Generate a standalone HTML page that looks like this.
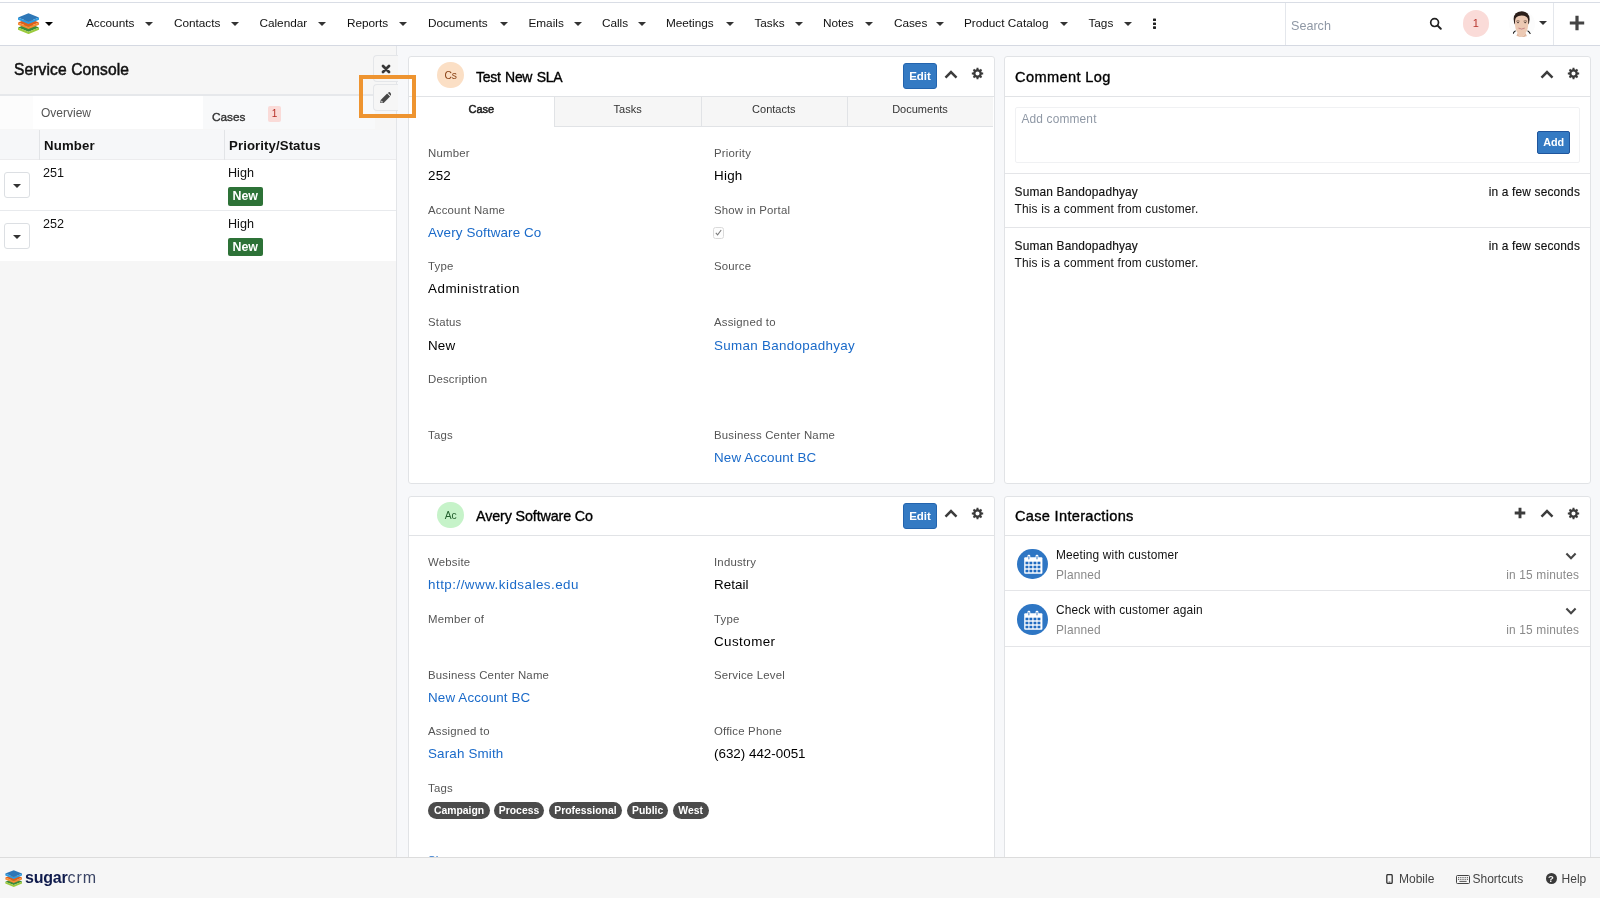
<!DOCTYPE html>
<html lang="en">
<head>
<meta charset="utf-8">
<title>Service Console</title>
<style>
*{box-sizing:border-box;margin:0;padding:0}
html,body{width:1600px;height:898px;overflow:hidden}
html{background:#f7f8fa}
body{position:relative;background:transparent;will-change:transform;font-family:"Liberation Sans",sans-serif;font-size:13px;color:#000;-webkit-font-smoothing:antialiased}
.abs{position:absolute}
.t{position:absolute;white-space:nowrap;line-height:1}
a{color:#176de5;text-decoration:none}

/* top nav */
#topline{left:0;top:0;width:1600px;height:3px;background:#fff;border-bottom:1px solid #d9dde5}
#nav{left:0;top:3px;width:1600px;height:43px;background:#fff;border-bottom:1px solid #d5d9e2}
.nv{position:absolute;top:12px;margin-left:.4px;font-size:11.8px;letter-spacing:0;white-space:nowrap;line-height:16px;color:#111}
.car{position:absolute;width:0;height:0;border-left:4px solid transparent;border-right:4px solid transparent;border-top:4px solid #333;top:19px}

/* left console */
#left{left:0;top:46px;width:397px;height:811px;background:#f6f6f6;border-right:1px solid #e3e5e8}
/* panels */
.panel{position:absolute;background:#fff;border:1px solid #e1e3e6;border-radius:3px}
.phead{position:absolute;left:0;top:0;right:0;height:38px;border-bottom:1px solid #e1e3e6}
.ptitle{position:absolute;font-size:15px;font-weight:normal;line-height:1;white-space:nowrap;color:#000;-webkit-text-stroke:.35px #000}
.lbl{position:absolute;font-size:12px;color:#555;line-height:1;white-space:nowrap;letter-spacing:.2px}
.val{position:absolute;font-size:14px;color:#000;line-height:1;white-space:nowrap;letter-spacing:.15px}
.val.lnk{color:#1a6ac9}
.btn{position:absolute;background:#347ac3;border:1px solid #2364ae;color:#fff;font-weight:bold;border-radius:3px;text-align:center;font-size:13px}

/* footer */
#foot{left:0;top:857px;width:1600px;height:41px;background:#f6f6f6;border-top:1px solid #dcdcdc}
</style>
</head>
<body>
<div id="topline" class="abs"></div>
<div id="nav" class="abs">
<svg class="abs" style="left:18px;top:10.1px" width="21" height="21.2" viewBox="0 0 21 21.2"><path d="M0 14.5 L10.5 10.2 L21 14.5 L10.5 18.8Z" fill="#3c8c3a"/><path d="M0 14.5 L10.5 18.8 L21 14.5 L21 16.8 L10.5 21.1 L0 16.8Z" fill="#9bcb3d"/><path d="M0 9.5 L10.5 5.2 L21 9.5 L10.5 13.8Z" fill="#df5f1b"/><path d="M0 9.5 L10.5 13.8 L21 9.5 L21 11.8 L10.5 16.1 L0 11.8Z" fill="#f58b34"/><path d="M0 4.5 L10.5 0.20000000000000018 L21 4.5 L10.5 8.8Z" fill="#2e77b7"/><path d="M0 4.5 L10.5 8.8 L21 4.5 L21 6.8 L10.5 11.100000000000001 L0 6.8Z" fill="#2e9be0"/></svg>
<div class="car" style="left:45px;top:19px;border-top-color:#000"></div>
<div class="nv" style="left:85.5px">Accounts</div><div class="car" style="left:145px"></div>
<div class="nv" style="left:173.5px">Contacts</div><div class="car" style="left:231px"></div>
<div class="nv" style="left:259.0px">Calendar</div><div class="car" style="left:318px"></div>
<div class="nv" style="left:346.5px">Reports</div><div class="car" style="left:399px"></div>
<div class="nv" style="left:427.5px">Documents</div><div class="car" style="left:500px"></div>
<div class="nv" style="left:528.0px">Emails</div><div class="car" style="left:573.5px"></div>
<div class="nv" style="left:601.5px">Calls</div><div class="car" style="left:637.5px"></div>
<div class="nv" style="left:665.5px">Meetings</div><div class="car" style="left:726px"></div>
<div class="nv" style="left:754.0px">Tasks</div><div class="car" style="left:795px"></div>
<div class="nv" style="left:822.5px">Notes</div><div class="car" style="left:865px"></div>
<div class="nv" style="left:893.5px">Cases</div><div class="car" style="left:935.5px"></div>
<div class="nv" style="left:963.5px">Product Catalog</div><div class="car" style="left:1060px"></div>
<div class="nv" style="left:1088.0px">Tags</div><div class="car" style="left:1123.5px"></div>
<svg class="abs" style="left:1152px;top:15px" width="5" height="12" viewBox="0 0 5 12"><rect x="1" y="0.5" width="3" height="2.6" rx=".6" fill="#222"/><rect x="1" y="4.4" width="3" height="2.6" rx=".6" fill="#222"/><rect x="1" y="8.3" width="3" height="2.6" rx=".6" fill="#222"/></svg>
<div class="abs" style="left:1285px;top:0;width:1px;height:42px;background:#e4e7ec"></div>
<div class="t" style="left:1291px;top:15px;font-size:12.6px;color:#8f98a5;line-height:16px">Search</div>
<svg class="abs" style="left:1429px;top:14.4px" width="14" height="14" viewBox="0 0 14 14"><circle cx="5.6" cy="5.6" r="3.9" fill="none" stroke="#222" stroke-width="1.7"/><path d="M8.6 8.6 L11.8 11.8" stroke="#222" stroke-width="2" stroke-linecap="round"/></svg>
<div class="abs" style="left:1462.5px;top:7.4px;width:26.7px;height:26.7px;border-radius:50%;background:#fadbd8;color:#b6322b;font-size:11px;line-height:27.4px;text-align:center">1</div>
<div class="abs" style="left:1508.8px;top:7.5px;width:26.4px;height:26.4px;border-radius:50%;overflow:hidden"><svg class="abs" style="left:-.8px;top:-.8px" width="28" height="28" viewBox="0 0 28 28"><g><rect width="28" height="28" fill="#fcfcfc"/><ellipse cx="13.6" cy="8.6" rx="7.9" ry="7.4" fill="#2b1e19"/><path d="M5.8 9 Q5.6 13 7 14.6 L7.6 10Z M21.4 9 Q21.6 13 20.2 14.6 L19.6 10Z" fill="#2b1e19"/><path d="M7 11.5 Q6.6 5.6 13.6 5.4 Q20.6 5.6 20.2 11.5 Q20.6 19 17.6 23 Q15.6 26.4 13.6 26.6 Q11.6 26.4 9.6 23 Q6.6 19 7 11.5Z" fill="#ecc9b3"/><path d="M9.6 23 Q11.6 26.4 13.6 26.6 Q15.6 26.4 17.6 23 L19.6 28 L7.6 28Z" fill="#e2b9a0"/><path d="M8.2 11.3 Q9.8 10.3 11.6 11.2 M15.6 11.2 Q17.4 10.3 19 11.3" stroke="#5a4236" stroke-width=".7" fill="none"/><ellipse cx="10" cy="12.6" rx="1.1" ry=".6" fill="#4b3a33"/><ellipse cx="17.2" cy="12.6" rx="1.1" ry=".6" fill="#4b3a33"/><path d="M10.6 18.2 Q13.6 20.6 16.6 18.2 Q13.6 19.4 10.6 18.2Z" fill="#fff" stroke="#c27a78" stroke-width=".6"/><path d="M4.6 24.4 Q5.8 21.6 7.6 20.8 M22.6 24.4 Q21.4 21.6 19.6 20.8" stroke="#1a1a1a" stroke-width="1.1" fill="none"/></g></svg></div>
<div class="car" style="left:1538.5px;top:18px"></div>
<div class="abs" style="left:1553px;top:0;width:1px;height:42px;background:#e4e7ec"></div>
<svg class="abs" style="left:1569px;top:12px" width="16" height="16" viewBox="0 0 16 16"><path d="M8 0.8 V15.2 M0.8 8 H15.2" stroke="#444" stroke-width="3.2"/></svg>
</div>

<div id="left" class="abs">
<div class="t" style="left:14px;top:15px;font-size:15.6px;line-height:18px;-webkit-text-stroke:.5px #111;color:#111;letter-spacing:.1px">Service Console</div>
<div class="abs" style="left:0;top:48px;width:396px;height:2px;background:#e6e8eb"></div>
<div class="abs" style="left:0;top:50px;width:33px;height:33px;background:#fcfcfc"></div><div class="abs" style="left:33px;top:50px;width:170px;height:33px;background:#fff"></div>
<div class="abs" style="left:203px;top:50px;width:172px;height:33px;background:#f8f9fa"></div>
<div class="t" style="left:41px;top:59px;font-size:12px;line-height:16px;color:#555">Overview</div>
<div class="t" style="left:212px;top:63px;font-size:11.8px;line-height:16px;color:#333;-webkit-text-stroke:.35px #333">Cases</div>
<div class="abs" style="left:268px;top:59.6px;width:13px;height:16.5px;border-radius:2px;background:#fadbd8;color:#b52a22;font-size:10px;line-height:16.5px;text-align:center">1</div>
<div class="abs" style="left:0;top:84px;width:396px;height:30px;background:#f6f7f9;border-bottom:1px solid #ececee"></div>
<div class="abs" style="left:39px;top:84px;width:1px;height:30px;background:#e2e4e7"></div>
<div class="abs" style="left:224px;top:84px;width:1px;height:30px;background:#e2e4e7"></div>
<div class="t" style="left:44px;top:92px;font-size:13.2px;line-height:16px;font-weight:bold;color:#111;letter-spacing:.15px">Number</div>
<div class="t" style="left:229px;top:92px;font-size:13.2px;line-height:16px;font-weight:bold;color:#111;letter-spacing:.1px">Priority/Status</div>
<div class="abs" style="left:0;top:114px;width:396px;height:101px;background:#fff"></div>
<div class="abs" style="left:0;top:164px;width:396px;height:1px;background:#e8eaed"></div>
<div class="abs" style="left:4px;top:126.2px;width:26px;height:26.3px;background:#fff;border:1px solid #dcdfe3;border-radius:3px"></div>
<div class="car" style="left:13px;top:138px"></div>
<div class="t" style="left:43px;top:119px;font-size:12.6px;line-height:16px;color:#111">251</div>
<div class="t" style="left:228px;top:119px;font-size:12.6px;line-height:16px;color:#111">High</div>
<div class="abs" style="left:228px;top:141.4px;width:34.5px;height:18.3px;background:#2d7237;border-radius:2px;color:#fff;font-weight:bold;font-size:12.4px;line-height:18.3px;text-align:center">New</div>
<div class="abs" style="left:4px;top:176.9px;width:26px;height:26px;background:#fff;border:1px solid #dcdfe3;border-radius:3px"></div>
<div class="car" style="left:13px;top:188.7px"></div>
<div class="t" style="left:43px;top:169.7px;font-size:12.6px;line-height:16px;color:#111">252</div>
<div class="t" style="left:228px;top:169.7px;font-size:12.6px;line-height:16px;color:#111">High</div>
<div class="abs" style="left:228px;top:192.2px;width:34.5px;height:18.3px;background:#2d7237;border-radius:2px;color:#fff;font-weight:bold;font-size:12.4px;line-height:18.3px;text-align:center">New</div>
</div>

<div class="abs" style="left:373px;top:55px;width:25px;height:27px;background:#f6f6f6;border:1px solid #e4e6e9;border-right:none;border-radius:4px 0 0 4px"></div>
<svg class="abs" style="left:381px;top:64.4px" width="10" height="10" viewBox="0 0 10 10"><path d="M2 2 L8 8 M8 2 L2 8" stroke="#383838" stroke-width="2.8" stroke-linecap="round"/></svg>
<div class="abs" style="left:373px;top:84px;width:25px;height:27px;background:#f6f6f6;border:1px solid #e4e6e9;border-right:none;border-radius:4px 0 0 4px"></div>
<svg class="abs" style="left:379.7px;top:91.6px" width="11.8" height="11.5" viewBox="0 -0.2 12.4 12"><path d="M0.2 11.8 L0.7 8.2 L7.5 1.4 L10.6 4.5 L3.8 11.3Z" fill="#474747"/><path d="M8.3 0.7 L9.2 -.1 Q9.8 -.4 10.4 .1 L12 1.7 Q12.5 2.3 12.1 2.9 L11.3 3.7Z" fill="#474747"/><path d="M1.6 8.8 L3.3 10.5 L1.2 10.9Z" fill="#f6f6f6"/></svg>
<div class="abs" style="left:359px;top:75.1px;width:57px;height:43.3px;border:4.7px solid #ee9430;z-index:10"></div>

<div class="panel" id="p1" style="left:408px;top:56px;width:586.5px;height:428px">
<div class="abs" style="left:0;top:0;width:584.5px;height:40px;border-bottom:1px solid #e1e3e6"></div>
<div class="abs" style="left:0;top:1px;width:584px;height:0">
<div class="abs" style="left:28.4px;top:3.5px;width:26.6px;height:26.6px;border-radius:50%;background:#fbdfc5;color:#8a4216;font-size:10.3px;line-height:27.6px;text-align:center">Cs</div>
<div class="ptitle" style="left:67px;top:9.5px;font-size:14px;line-height:18px;letter-spacing:-.3px;word-spacing:1px">Test New SLA</div>
<div class="btn" style="left:494px;top:5px;width:34px;height:26px;line-height:25px;font-size:11.5px">Edit</div>
<svg class="abs" style="left:534.6px;top:11.5px" width="14" height="10" viewBox="0 0 14 10"><path d="M1.5 7.6 L7 2.1 L12.5 7.6" fill="none" stroke="#3c3c3c" stroke-width="2.5"/></svg>
<svg class="abs" style="left:561.6px;top:8.9px" width="13" height="13" viewBox="-7 -7 14 14"><path fill-rule="evenodd" d="M-1.13 -4.56 L-1.02 -6.12 L1.02 -6.12 L1.13 -4.56 L2.42 -4.03 L3.60 -5.04 L5.04 -3.60 L4.03 -2.42 L4.56 -1.13 L6.12 -1.02 L6.12 1.02 L4.56 1.13 L4.03 2.42 L5.04 3.60 L3.60 5.04 L2.42 4.03 L1.13 4.56 L1.02 6.12 L-1.02 6.12 L-1.13 4.56 L-2.42 4.03 L-3.60 5.04 L-5.04 3.60 L-4.03 2.42 L-4.56 1.13 L-6.12 1.02 L-6.12 -1.02 L-4.56 -1.13 L-4.03 -2.42 L-5.04 -3.60 L-3.60 -5.04 L-2.42 -4.03Z M2.2 0 A2.2 2.2 0 1 0 -2.2 0 A2.2 2.2 0 1 0 2.2 0Z" fill="#3a3a3a"/></svg>
<div class="abs" style="left:145px;top:39px;width:439px;height:30px;background:#f6f6f6;border-bottom:1px solid #e1e3e6"></div>
<div class="abs" style="left:145px;top:39px;width:1px;height:30px;background:#e1e3e6"></div>
<div class="abs" style="left:291.5px;top:39px;width:1px;height:30px;background:#e1e3e6"></div>
<div class="abs" style="left:438px;top:39px;width:1px;height:30px;background:#e1e3e6"></div>
<div class="t" style="left:22.399999999999977px;width:100px;text-align:center;top:43px;font-size:11px;line-height:16px;color:#222;-webkit-text-stroke:.5px #222;">Case</div>
<div class="t" style="left:168.60000000000002px;width:100px;text-align:center;top:43px;font-size:11px;line-height:16px;color:#333;">Tasks</div>
<div class="t" style="left:314.79999999999995px;width:100px;text-align:center;top:43px;font-size:11px;line-height:16px;color:#333;">Contacts</div>
<div class="t" style="left:461px;width:100px;text-align:center;top:43px;font-size:11px;line-height:16px;color:#333;">Documents</div>
<div class="lbl" style="left:19px;top:87.0px;font-size:11.4px;line-height:16px;">Number</div>
<div class="val" style="left:19px;top:109.1px;font-size:13.4px;line-height:18px;letter-spacing:0.22px;">252</div>
<div class="lbl" style="left:305px;top:87.0px;font-size:11.4px;line-height:16px;">Priority</div>
<div class="val" style="left:305px;top:109.1px;font-size:13.4px;line-height:18px;letter-spacing:0.24px;">High</div>
<div class="lbl" style="left:19px;top:143.5px;font-size:11.4px;line-height:16px;">Account Name</div>
<div class="val lnk" style="left:19px;top:165.6px;font-size:13.4px;line-height:18px;letter-spacing:0.12px;">Avery Software Co</div>
<div class="lbl" style="left:305px;top:143.5px;font-size:11.4px;line-height:16px;">Show in Portal</div>
<div class="abs" style="left:304px;top:169px;width:11.4px;height:11.6px;border:1px solid #dadada;border-radius:2.5px;background:#fdfdfd"></div><svg class="abs" style="left:306.2px;top:171.2px" width="7" height="7" viewBox="0 0 7 7"><path d="M.8 3.8 L2.6 5.8 L6.2 1" fill="none" stroke="#7a7a7a" stroke-width="1.05"/></svg>
<div class="lbl" style="left:19px;top:200.0px;font-size:11.4px;line-height:16px;">Type</div>
<div class="val" style="left:19px;top:222.1px;font-size:13.4px;line-height:18px;letter-spacing:0.51px;">Administration</div>
<div class="lbl" style="left:305px;top:200.0px;font-size:11.4px;line-height:16px;">Source</div>
<div class="lbl" style="left:19px;top:256.4px;font-size:11.4px;line-height:16px;">Status</div>
<div class="val" style="left:19px;top:278.5px;font-size:13.4px;line-height:18px;letter-spacing:0.15px;">New</div>
<div class="lbl" style="left:305px;top:256.4px;font-size:11.4px;line-height:16px;">Assigned to</div>
<div class="val lnk" style="left:305px;top:278.5px;font-size:13.4px;line-height:18px;letter-spacing:0.31px;">Suman Bandopadhyay</div>
<div class="lbl" style="left:19px;top:312.8px;font-size:11.4px;line-height:16px;">Description</div>
<div class="lbl" style="left:19px;top:369.2px;font-size:11.4px;line-height:16px;">Tags</div>
<div class="lbl" style="left:305px;top:369.2px;font-size:11.4px;line-height:16px;">Business Center Name</div>
<div class="val lnk" style="left:305px;top:391.3px;font-size:13.4px;line-height:18px;letter-spacing:0.14px;">New Account BC</div>
</div>
</div>

<div class="panel" id="p2" style="left:408px;top:496px;width:586.5px;height:380px">
<div class="abs" style="left:0;top:0;width:584.5px;height:39px;border-bottom:1px solid #e1e3e6"></div>
<div class="abs" style="left:28.4px;top:4.7px;width:26.6px;height:26.6px;border-radius:50%;background:#c6f3c9;color:#225f2c;font-size:10.3px;line-height:27.6px;text-align:center">Ac</div>
<div class="ptitle" style="left:67px;top:10.0px;font-size:14.3px;line-height:18px;letter-spacing:-.12px">Avery Software Co</div>
<div class="btn" style="left:494px;top:5.5px;width:34px;height:26px;line-height:25px;font-size:11.5px">Edit</div>
<svg class="abs" style="left:534.6px;top:12.0px" width="14" height="10" viewBox="0 0 14 10"><path d="M1.5 7.6 L7 2.1 L12.5 7.6" fill="none" stroke="#3c3c3c" stroke-width="2.5"/></svg>
<svg class="abs" style="left:561.6px;top:9.9px" width="13" height="13" viewBox="-7 -7 14 14"><path fill-rule="evenodd" d="M-1.13 -4.56 L-1.02 -6.12 L1.02 -6.12 L1.13 -4.56 L2.42 -4.03 L3.60 -5.04 L5.04 -3.60 L4.03 -2.42 L4.56 -1.13 L6.12 -1.02 L6.12 1.02 L4.56 1.13 L4.03 2.42 L5.04 3.60 L3.60 5.04 L2.42 4.03 L1.13 4.56 L1.02 6.12 L-1.02 6.12 L-1.13 4.56 L-2.42 4.03 L-3.60 5.04 L-5.04 3.60 L-4.03 2.42 L-4.56 1.13 L-6.12 1.02 L-6.12 -1.02 L-4.56 -1.13 L-4.03 -2.42 L-5.04 -3.60 L-3.60 -5.04 L-2.42 -4.03Z M2.2 0 A2.2 2.2 0 1 0 -2.2 0 A2.2 2.2 0 1 0 2.2 0Z" fill="#3a3a3a"/></svg>
<div class="lbl" style="left:19px;top:57.0px;font-size:11.4px;line-height:16px;">Website</div>
<div class="val lnk" style="left:19px;top:79.1px;font-size:13.4px;line-height:18px;letter-spacing:0.48px;">http://www.kidsales.edu</div>
<div class="lbl" style="left:305px;top:57.0px;font-size:11.4px;line-height:16px;">Industry</div>
<div class="val" style="left:305px;top:79.1px;font-size:13.4px;line-height:18px;letter-spacing:0.04px;">Retail</div>
<div class="lbl" style="left:19px;top:113.5px;font-size:11.4px;line-height:16px;">Member of</div>
<div class="lbl" style="left:305px;top:113.5px;font-size:11.4px;line-height:16px;">Type</div>
<div class="val" style="left:305px;top:135.6px;font-size:13.4px;line-height:18px;letter-spacing:0.43px;">Customer</div>
<div class="lbl" style="left:19px;top:170.0px;font-size:11.4px;line-height:16px;">Business Center Name</div>
<div class="val lnk" style="left:19px;top:192.1px;font-size:13.4px;line-height:18px;letter-spacing:0.14px;">New Account BC</div>
<div class="lbl" style="left:305px;top:170.0px;font-size:11.4px;line-height:16px;">Service Level</div>
<div class="lbl" style="left:19px;top:226.3px;font-size:11.4px;line-height:16px;">Assigned to</div>
<div class="val lnk" style="left:19px;top:248.4px;font-size:13.4px;line-height:18px;letter-spacing:0.16px;">Sarah Smith</div>
<div class="lbl" style="left:305px;top:226.3px;font-size:11.4px;line-height:16px;">Office Phone</div>
<div class="val" style="left:305px;top:248.4px;font-size:13.4px;line-height:18px;letter-spacing:0px;">(632) 442-0051</div>
<div class="lbl" style="left:19px;top:282.6px;font-size:11.4px;line-height:16px;">Tags</div>
<div class="abs" style="left:19px;top:304.6px;width:62px;height:17.6px;border-radius:9px;background:#4b4b4b;color:#fff;font-weight:bold;font-size:10.4px;line-height:17.6px;text-align:center;white-space:nowrap">Campaign</div>
<div class="abs" style="left:85px;top:304.6px;width:50px;height:17.6px;border-radius:9px;background:#4b4b4b;color:#fff;font-weight:bold;font-size:10.4px;line-height:17.6px;text-align:center;white-space:nowrap">Process</div>
<div class="abs" style="left:139.5px;top:304.6px;width:73.89999999999998px;height:17.6px;border-radius:9px;background:#4b4b4b;color:#fff;font-weight:bold;font-size:10.4px;line-height:17.6px;text-align:center;white-space:nowrap">Professional</div>
<div class="abs" style="left:217.79999999999995px;top:304.6px;width:41.700000000000045px;height:17.6px;border-radius:9px;background:#4b4b4b;color:#fff;font-weight:bold;font-size:10.4px;line-height:17.6px;text-align:center;white-space:nowrap">Public</div>
<div class="abs" style="left:263.6px;top:304.6px;width:36.0px;height:17.6px;border-radius:9px;background:#4b4b4b;color:#fff;font-weight:bold;font-size:10.4px;line-height:17.6px;text-align:center;white-space:nowrap">West</div>
<div class="val lnk" style="left:19px;top:354.7px;font-size:11.4px;line-height:16px;">Show more</div>
</div>

<div class="panel" id="p3" style="left:1004px;top:56px;width:586.5px;height:428px">
<div class="abs" style="left:0;top:0;width:584.5px;height:40px;border-bottom:1px solid #e1e3e6"></div>
<div class="abs" style="left:0;top:1px;width:584px;height:0">
<div class="ptitle" style="left:10px;top:9.5px;font-size:14.6px;line-height:18px;letter-spacing:.38px">Comment Log</div>
<svg class="abs" style="left:534.5px;top:11.5px" width="14" height="10" viewBox="0 0 14 10"><path d="M1.5 7.6 L7 2.1 L12.5 7.6" fill="none" stroke="#3c3c3c" stroke-width="2.5"/></svg>
<svg class="abs" style="left:561.6px;top:8.9px" width="13" height="13" viewBox="-7 -7 14 14"><path fill-rule="evenodd" d="M-1.13 -4.56 L-1.02 -6.12 L1.02 -6.12 L1.13 -4.56 L2.42 -4.03 L3.60 -5.04 L5.04 -3.60 L4.03 -2.42 L4.56 -1.13 L6.12 -1.02 L6.12 1.02 L4.56 1.13 L4.03 2.42 L5.04 3.60 L3.60 5.04 L2.42 4.03 L1.13 4.56 L1.02 6.12 L-1.02 6.12 L-1.13 4.56 L-2.42 4.03 L-3.60 5.04 L-5.04 3.60 L-4.03 2.42 L-4.56 1.13 L-6.12 1.02 L-6.12 -1.02 L-4.56 -1.13 L-4.03 -2.42 L-5.04 -3.60 L-3.60 -5.04 L-2.42 -4.03Z M2.2 0 A2.2 2.2 0 1 0 -2.2 0 A2.2 2.2 0 1 0 2.2 0Z" fill="#3a3a3a"/></svg>
<div class="abs" style="left:9.5px;top:49px;width:565px;height:55.5px;border:1px solid #f0f1f3;border-radius:2px;background:#fff"></div>
<div class="t" style="left:16.399999999999977px;top:53.0px;font-size:11.9px;line-height:16px;letter-spacing:.17px;color:#8f98a5;">Add comment</div>
<div class="btn" style="left:532px;top:73px;width:33.3px;height:22.5px;line-height:20px;font-size:10.8px;border-radius:2px;border-color:#1f559c">Add</div>
<div class="abs" style="left:0;top:115px;width:584.5px;height:1px;background:#e4e5e8"></div>
<div class="abs" style="left:0;top:169.4px;width:584.5px;height:1px;background:#e4e5e8"></div>
<div class="t" style="left:9.600000000000023px;top:125.7px;font-size:11.9px;line-height:16px;letter-spacing:.17px;color:#111;-webkit-text-stroke:.15px #111;">Suman Bandopadhyay</div>
<div class="t" style="right:9px;top:125.69999999999999px;font-size:11.9px;line-height:16px;letter-spacing:.17px;color:#111;-webkit-text-stroke:.15px #111">in a few seconds</div>
<div class="t" style="left:9.600000000000023px;top:143.2px;font-size:11.9px;line-height:16px;letter-spacing:.17px;color:#111;">This is a comment from customer.</div>
<div class="t" style="left:9.600000000000023px;top:179.7px;font-size:11.9px;line-height:16px;letter-spacing:.17px;color:#111;-webkit-text-stroke:.15px #111;">Suman Bandopadhyay</div>
<div class="t" style="right:9px;top:179.7px;font-size:11.9px;line-height:16px;letter-spacing:.17px;color:#111;-webkit-text-stroke:.15px #111">in a few seconds</div>
<div class="t" style="left:9.600000000000023px;top:197.2px;font-size:11.9px;line-height:16px;letter-spacing:.17px;color:#111;">This is a comment from customer.</div>
</div>
</div>

<div class="panel" id="p4" style="left:1004px;top:496px;width:586.5px;height:380px">
<div class="abs" style="left:0;top:0;width:584.5px;height:39px;border-bottom:1px solid #e1e3e6"></div>
<div class="ptitle" style="left:10px;top:10.0px;font-size:14.6px;line-height:18px;letter-spacing:.3px">Case Interactions</div>
<svg class="abs" style="left:508.70000000000005px;top:9.700000000000045px" width="12" height="12" viewBox="0 0 12 12"><path d="M6 .7 V11.3 M.7 6 H11.3" stroke="#3c3c3c" stroke-width="2.9"/></svg>
<svg class="abs" style="left:534.5px;top:12.0px" width="14" height="10" viewBox="0 0 14 10"><path d="M1.5 7.6 L7 2.1 L12.5 7.6" fill="none" stroke="#3c3c3c" stroke-width="2.5"/></svg>
<svg class="abs" style="left:561.6px;top:9.8px" width="13" height="13" viewBox="-7 -7 14 14"><path fill-rule="evenodd" d="M-1.13 -4.56 L-1.02 -6.12 L1.02 -6.12 L1.13 -4.56 L2.42 -4.03 L3.60 -5.04 L5.04 -3.60 L4.03 -2.42 L4.56 -1.13 L6.12 -1.02 L6.12 1.02 L4.56 1.13 L4.03 2.42 L5.04 3.60 L3.60 5.04 L2.42 4.03 L1.13 4.56 L1.02 6.12 L-1.02 6.12 L-1.13 4.56 L-2.42 4.03 L-3.60 5.04 L-5.04 3.60 L-4.03 2.42 L-4.56 1.13 L-6.12 1.02 L-6.12 -1.02 L-4.56 -1.13 L-4.03 -2.42 L-5.04 -3.60 L-3.60 -5.04 L-2.42 -4.03Z M2.2 0 A2.2 2.2 0 1 0 -2.2 0 A2.2 2.2 0 1 0 2.2 0Z" fill="#3a3a3a"/></svg>
<div class="abs" style="left:12.3px;top:51.9px;width:30.6px;height:30.6px;border-radius:50%;background:#2e76c4"><svg class="abs" style="left:.3px;top:.2px" width="30" height="30" viewBox="0 0 30 30"><rect x="6.2" y="8.3" width="18.2" height="16.4" rx="1" fill="#fff"/><rect x="9.5" y="5.8" width="2.8" height="4" rx="1.2" fill="#fff"/><rect x="17.6" y="5.8" width="2.8" height="4" rx="1.2" fill="#fff"/><rect x="10.45" y="6.9" width=".9" height="3.6" rx=".45" fill="#1f6ac0"/><rect x="18.55" y="6.9" width=".9" height="3.6" rx=".45" fill="#1f6ac0"/><rect x="7.5" y="12.7" width="2.9" height="2.6" fill="#1f6ac0"/><rect x="11.45" y="12.7" width="2.9" height="2.6" fill="#1f6ac0"/><rect x="15.5" y="12.7" width="2.9" height="2.6" fill="#1f6ac0"/><rect x="19.5" y="12.7" width="2.9" height="2.6" fill="#1f6ac0"/><rect x="7.5" y="16.7" width="2.9" height="2.6" fill="#1f6ac0"/><rect x="11.45" y="16.7" width="2.9" height="2.6" fill="#1f6ac0"/><rect x="15.5" y="16.7" width="2.9" height="2.6" fill="#1f6ac0"/><rect x="19.5" y="16.7" width="2.9" height="2.6" fill="#1f6ac0"/><rect x="7.5" y="20.7" width="2.9" height="2.6" fill="#1f6ac0"/><rect x="11.45" y="20.7" width="2.9" height="2.6" fill="#1f6ac0"/><rect x="15.5" y="20.7" width="2.9" height="2.6" fill="#1f6ac0"/><rect x="19.5" y="20.7" width="2.9" height="2.6" fill="#1f6ac0"/></svg></div>
<div class="t" style="left:50.90000000000009px;top:49.6px;font-size:11.9px;line-height:16px;letter-spacing:.17px;color:#111;">Meeting with customer</div>
<div class="t" style="left:51px;top:69.6px;font-size:11.9px;line-height:16px;letter-spacing:.17px;color:#8a8a8a;">Planned</div>
<svg class="abs" style="left:560.2px;top:54.69999999999993px" width="12" height="8" viewBox="0 0 12 8"><path d="M1.4 1.6 L6 6.2 L10.6 1.6" fill="none" stroke="#464646" stroke-width="2.1"/></svg>
<div class="t" style="right:10.299999999999955px;top:69.60000000000002px;font-size:11.9px;line-height:16px;letter-spacing:.17px;color:#8a8a8a">in 15 minutes</div>
<div class="abs" style="left:0;top:93.39999999999998px;width:584.5px;height:1px;background:#e4e5e8"></div>
<div class="abs" style="left:12.3px;top:107.4px;width:30.6px;height:30.6px;border-radius:50%;background:#2e76c4"><svg class="abs" style="left:.3px;top:.2px" width="30" height="30" viewBox="0 0 30 30"><rect x="6.2" y="8.3" width="18.2" height="16.4" rx="1" fill="#fff"/><rect x="9.5" y="5.8" width="2.8" height="4" rx="1.2" fill="#fff"/><rect x="17.6" y="5.8" width="2.8" height="4" rx="1.2" fill="#fff"/><rect x="10.45" y="6.9" width=".9" height="3.6" rx=".45" fill="#1f6ac0"/><rect x="18.55" y="6.9" width=".9" height="3.6" rx=".45" fill="#1f6ac0"/><rect x="7.5" y="12.7" width="2.9" height="2.6" fill="#1f6ac0"/><rect x="11.45" y="12.7" width="2.9" height="2.6" fill="#1f6ac0"/><rect x="15.5" y="12.7" width="2.9" height="2.6" fill="#1f6ac0"/><rect x="19.5" y="12.7" width="2.9" height="2.6" fill="#1f6ac0"/><rect x="7.5" y="16.7" width="2.9" height="2.6" fill="#1f6ac0"/><rect x="11.45" y="16.7" width="2.9" height="2.6" fill="#1f6ac0"/><rect x="15.5" y="16.7" width="2.9" height="2.6" fill="#1f6ac0"/><rect x="19.5" y="16.7" width="2.9" height="2.6" fill="#1f6ac0"/><rect x="7.5" y="20.7" width="2.9" height="2.6" fill="#1f6ac0"/><rect x="11.45" y="20.7" width="2.9" height="2.6" fill="#1f6ac0"/><rect x="15.5" y="20.7" width="2.9" height="2.6" fill="#1f6ac0"/><rect x="19.5" y="20.7" width="2.9" height="2.6" fill="#1f6ac0"/></svg></div>
<div class="t" style="left:50.90000000000009px;top:105.1px;font-size:11.9px;line-height:16px;letter-spacing:.17px;color:#111;">Check with customer again</div>
<div class="t" style="left:51px;top:125.1px;font-size:11.9px;line-height:16px;letter-spacing:.17px;color:#8a8a8a;">Planned</div>
<svg class="abs" style="left:560.2px;top:110.19999999999993px" width="12" height="8" viewBox="0 0 12 8"><path d="M1.4 1.6 L6 6.2 L10.6 1.6" fill="none" stroke="#464646" stroke-width="2.1"/></svg>
<div class="t" style="right:10.299999999999955px;top:125.10000000000002px;font-size:11.9px;line-height:16px;letter-spacing:.17px;color:#8a8a8a">in 15 minutes</div>
<div class="abs" style="left:0;top:148.89999999999998px;width:584.5px;height:1px;background:#e4e5e8"></div>
</div>

<div id="foot" class="abs">
<svg class="abs" style="left:4.5px;top:12px" width="17.5" height="17" viewBox="0 0 21 21.2"><path d="M0 14.5 L10.5 10.2 L21 14.5 L10.5 18.8Z" fill="#3c8c3a"/><path d="M0 14.5 L10.5 18.8 L21 14.5 L21 16.8 L10.5 21.1 L0 16.8Z" fill="#9bcb3d"/><path d="M0 9.5 L10.5 5.2 L21 9.5 L10.5 13.8Z" fill="#df5f1b"/><path d="M0 9.5 L10.5 13.8 L21 9.5 L21 11.8 L10.5 16.1 L0 11.8Z" fill="#f58b34"/><path d="M0 4.5 L10.5 0.20000000000000018 L21 4.5 L10.5 8.8Z" fill="#2e77b7"/><path d="M0 4.5 L10.5 8.8 L21 4.5 L21 6.8 L10.5 11.100000000000001 L0 6.8Z" fill="#2e9be0"/></svg>
<div class="t" style="left:25px;top:10px;font-size:16px;line-height:20px;color:#0f1b4c"><span style="font-weight:bold;letter-spacing:-.2px">sugar</span><span style="color:#3a4465;letter-spacing:.9px">crm</span></div>
<svg class="abs" style="left:1385.5px;top:16.299999999999955px" width="7" height="10" viewBox="0 0 7 10"><rect x=".8" y=".6" width="5.4" height="8.8" rx="1.1" fill="none" stroke="#333" stroke-width="1.3"/><rect x="2.6" y="7.6" width="1.8" height=".9" fill="#333"/></svg>
<div class="t" style="left:1399px;top:12.9px;font-size:12px;line-height:16px;color:#444">Mobile</div>
<svg class="abs" style="left:1456px;top:16.799999999999955px" width="14" height="9" viewBox="0 0 14 9"><rect x=".5" y=".5" width="13" height="8" rx="1" fill="none" stroke="#444" stroke-width="1"/><path d="M2 2.6 H12 M2 4.4 H12" stroke="#444" stroke-width=".9" stroke-dasharray="1 .8"/><path d="M3.4 6.4 H10.6" stroke="#444" stroke-width=".9"/></svg>
<div class="t" style="left:1472.5px;top:12.9px;font-size:12px;line-height:16px;color:#444">Shortcuts</div>
<div class="abs" style="left:1545.5px;top:15px;width:11px;height:11px;border-radius:50%;background:#3a3a3a;color:#f6f6f6;font-weight:bold;font-size:9.5px;line-height:11px;text-align:center">?</div>
<div class="t" style="left:1561.6px;top:12.9px;font-size:12px;line-height:16px;color:#444">Help</div>
</div>
</body>
</html>
